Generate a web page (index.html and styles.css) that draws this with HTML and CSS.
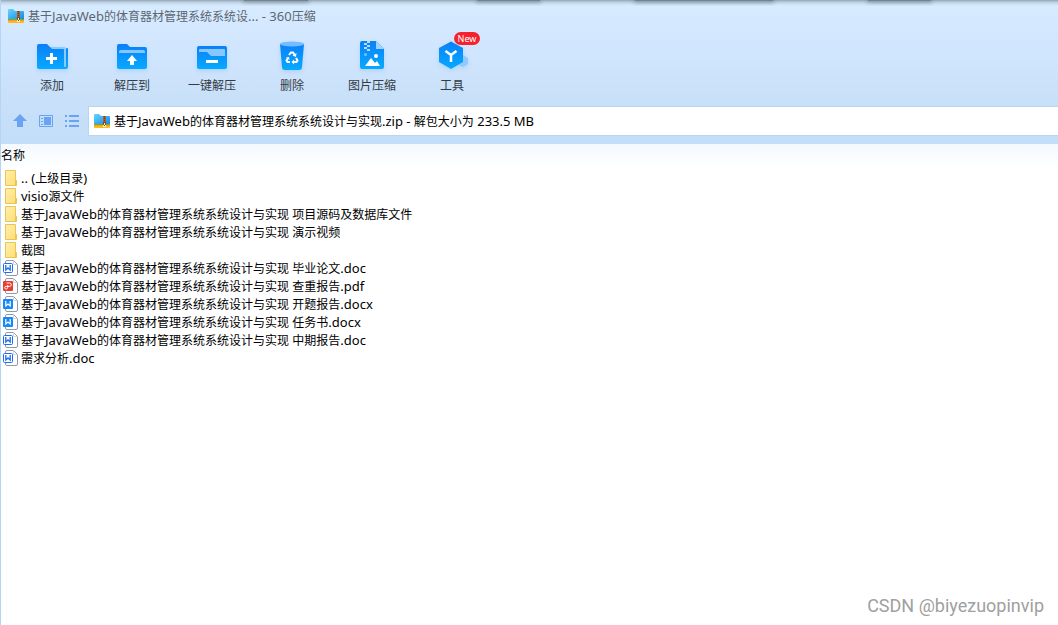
FILE: index.html
```html
<!DOCTYPE html>
<html lang="zh-CN">
<head>
<meta charset="utf-8">
<title>360压缩</title>
<link rel="stylesheet" href="styles.css">
</head>
<body>
<svg class="defs" aria-hidden="true">
  <defs>
    <linearGradient id="blue" x1="0" y1="0" x2="0" y2="1"><stop offset="0" stop-color="#0a80f8"/><stop offset="1" stop-color="#06aaff"/></linearGradient>
    <linearGradient id="zipblue" x1="0" y1="0" x2="1" y2="1"><stop offset="0" stop-color="#66d5ff"/><stop offset="1" stop-color="#1789e6"/></linearGradient>
    <linearGradient id="yellow" x1="0" y1="0" x2="1" y2="1"><stop offset="0" stop-color="#fff0b0"/><stop offset="1" stop-color="#ffdc70"/></linearGradient>
    <symbol id="zip" viewBox="0 0 16 14">
      <path d="M0 1Q0 0 1 0h4l2 2h8q1 0 1 1v7H0z" fill="url(#zipblue)"/>
      <path d="M0 10h16v1H0z" fill="#65b82e"/><path d="M0 11h16v2q0 1-1 1H1q-1 0-1-1z" fill="#ffb91e"/><path d="M0 11h16v1H0z" fill="#ff961b"/>
      <path d="M9 2h3v8H9z" fill="#a5612f"/><path d="M10 2h1v1h-1zM10 4h1v1h-1zM10 6h1v1h-1z" fill="#6e3d1f"/>
      <path d="M9 8h3v5H9z" fill="#7c4a25"/><path d="M10 9h1v2h1v2H9v-2h1z" fill="#fff0bb"/><path d="M10 11h1v1h-1z" fill="#7c4a25"/>
    </symbol>
    <symbol id="folder" viewBox="0 0 16 16"><path d="M2.5.5h10v10h1v5h-11z" fill="url(#yellow)" stroke="#e9c653"/><path d="M12.500 10.500v5" stroke="#e9c653"/></symbol>
    <symbol id="page" viewBox="0 0 16 16"><path d="M2.500 3V2q0-1.500 1.500-1.500h6.500l4 4V14q0 1.500-1.500 1.500H4Q2.500 15.500 2.500 14v-1" fill="#fff" stroke="#9299aa"/><path d="M10.500.5v4h4" fill="none" stroke="#d5d8df"/></symbol>
    <symbol id="doc" viewBox="0 0 16 16"><use href="#page"/><rect x=".5" y="3.500" width="9" height="9" rx="1" fill="#fff" stroke="#1c6cf0"/><path d="M2.800 5v5l2.200-2 2.200 2V5" fill="none" stroke="#1c6cf0" stroke-width="1.300"/></symbol>
    <symbol id="docx" viewBox="0 0 16 16"><use href="#page"/><rect y="3" width="10" height="10" rx="1" fill="#1688fa"/><path d="M2.800 5v5l2.200-2 2.200 2V5" fill="none" stroke="#fff" stroke-width="1.200"/></symbol>
    <symbol id="pdf" viewBox="0 0 16 16"><use href="#page"/><rect y="3" width="10" height="10" rx="1" fill="#ed3b31"/><path d="M3.500 5h3q1.800 0 1.800 1.700T6.500 8.400H3.200q-1.500 0-1.500 1.300T3.200 11q1.500 0 1.500-1.500V7" fill="none" stroke="#fff"/></symbol>
  </defs>
</svg>
<div class="window">
  <header class="chrome">
    <div class="edge" aria-hidden="true"><i></i><i></i><i></i><i></i></div>
    <h1 class="title"><svg class="zip"><use href="#zip"/></svg><span>基于<b>JavaWeb</b>的体育器材管理系统系统设<b>... - 360</b>压缩</span></h1>
    <nav class="tools">
      <button type="button"><svg viewBox="0 0 40 36"><path d="M5 7q0-2 2-2h8l3 3h14v2l4-1v19q0 2-2 2H7q-2 0-2-2z" fill="url(#blue)"/><path d="M18 8h14q2 0 2 2v18h-1q-1 0-1-1V11q0-1-1-1H20z" fill="#8acaff"/><path d="M14 19.500h11M19.500 14v11" stroke="#fff" stroke-width="3"/></svg>添加</button>
      <button type="button"><svg viewBox="0 0 40 36"><path d="M5 7q0-2 2-2h8l3 3h15q2 0 2 2v18q0 2-2 2H7q-2 0-2-2z" fill="url(#blue)"/><path d="M7 14v-1q0-2 2-2h22q2 0 2 2v1z" fill="#86c7ff"/><path d="m20 16 5 6h-3v4h-4v-4h-3z" fill="#fff"/></svg>解压到</button>
      <button type="button"><svg viewBox="0 0 40 36"><rect x="5" y="7" width="30" height="23" rx="2" fill="url(#blue)"/><path d="M7 13v-2q0-1 1-1h24q1 0 1 1v6H19l-4-4z" fill="#86c7ff"/><path d="M14 22.500h12" stroke="#fff" stroke-width="3"/></svg>一键解压</button>
      <button type="button"><svg viewBox="0 0 40 36"><path d="M8 5h24l-2 23q0 3-3 3H13q-3 0-3-3z" fill="url(#blue)"/><ellipse cx="20" cy="5" rx="12" ry="2.500" fill="#75bdff"/><path d="m17 16 2-2.500h2l2 3M18 23h-2.500l-1-1.500 1.500-2.500M21.500 23h3l1-1.500-1.500-2.500" fill="none" stroke="#fff" stroke-width="2"/><path d="m24.500 14-.5 4-3.500-1.500zM14 18.500l3-.5.500 3zM22 20.500v5L19.500 23z" fill="#fff"/></svg>删除</button>
      <button type="button"><svg viewBox="0 0 40 36"><path d="M8 4q0-2 2-2h14l8 8v18q0 2-2 2H10q-2 0-2-2z" fill="url(#blue)"/><path d="M24 2l8 8h-8z" fill="#a0d3ff"/><path d="M12 4h3v2h-3zM15 2h3v2h-3zM15 6h3v2h-3zM12 8h3v2h-3zM15 10h3v2h-3z" fill="#b3dcff"/><circle cx="13.500" cy="15.500" r="1.500" fill="#76c3ff"/><circle cx="24" cy="17" r="2" fill="#fff"/><path d="m13 27 6-8 4 5 2-2 3 5z" fill="#fff"/></svg>图片压缩</button>
      <button type="button"><svg viewBox="0 0 40 36"><path d="m31 16 5 3v6l-5 3-6-3v-6z" fill="#91c9ff"/><path d="M19 2.500 31 9v14l-12 7-12-7V9z" fill="url(#blue)"/><path d="m13.500 12 5.500 4 5.500-4M19 16v7" fill="none" stroke="#fff" stroke-width="2.500"/></svg>工具<em class="badge">New</em></button>
    </nav>
    <div class="address">
      <div class="views">
        <button type="button" aria-label="上级目录"><svg viewBox="0 0 16 16"><path d="m8 1 7 7h-4v6H5V8H1z" fill="#69a3f1"/></svg></button>
        <button type="button" aria-label="预览"><svg viewBox="0 0 16 16"><path d="M1.500 2.500h13v11h-13z" fill="#c3ddfc" stroke="#69a3f1"/><path d="M6 4h7v8H6zM3 5h2v1H3zM3 8h2v1H3zM3 11h2v1H3z" fill="#69a3f1"/></svg></button>
        <button type="button" aria-label="列表"><svg viewBox="0 0 16 16"><path d="M1 2h2v2H1zM1 7h2v2H1zM1 12h2v2H1zM5 2h10v2H5zM5 7h10v2H5zM5 12h10v2H5z" fill="#69a3f1"/></svg></button>
      </div>
      <div class="path"><svg class="zip"><use href="#zip"/></svg><span>基于<b>JavaWeb</b>的体育器材管理系统系统设计与实现<b>.zip - </b>解包大小为<b> 233.5 MB</b></span></div>
    </div>
  </header>
  <main>
    <table class="files">
      <thead><tr><th scope="col">名称</th></tr></thead>
      <tbody>
        <tr><td><svg><use href="#folder"/></svg><b>.. (</b>上级目录<b>)</b></td></tr>
        <tr><td><svg><use href="#folder"/></svg><b>visio</b>源文件</td></tr>
        <tr><td><svg><use href="#folder"/></svg>基于<b>JavaWeb</b>的体育器材管理系统系统设计与实现<b> </b>项目源码及数据库文件</td></tr>
        <tr><td><svg><use href="#folder"/></svg>基于<b>JavaWeb</b>的体育器材管理系统系统设计与实现<b> </b>演示视频</td></tr>
        <tr><td><svg><use href="#folder"/></svg>截图</td></tr>
        <tr><td><svg><use href="#doc"/></svg>基于<b>JavaWeb</b>的体育器材管理系统系统设计与实现<b> </b>毕业论文<b>.doc</b></td></tr>
        <tr><td><svg><use href="#pdf"/></svg>基于<b>JavaWeb</b>的体育器材管理系统系统设计与实现<b> </b>查重报告<b>.pdf</b></td></tr>
        <tr><td><svg><use href="#docx"/></svg>基于<b>JavaWeb</b>的体育器材管理系统系统设计与实现<b> </b>开题报告<b>.docx</b></td></tr>
        <tr><td><svg><use href="#docx"/></svg>基于<b>JavaWeb</b>的体育器材管理系统系统设计与实现<b> </b>任务书<b>.docx</b></td></tr>
        <tr><td><svg><use href="#doc"/></svg>基于<b>JavaWeb</b>的体育器材管理系统系统设计与实现<b> </b>中期报告<b>.doc</b></td></tr>
        <tr><td><svg><use href="#doc"/></svg>需求分析<b>.doc</b></td></tr>
      </tbody>
    </table>
  </main>
  <footer class="mark">CSDN @biyezuopinvip</footer>
</div>
</body>
</html>
```
FILE: styles.css
```css
* { box-sizing: border-box; }
body { margin: 0; background: #fff; color: #000; font: 12px/18px "Noto Sans", "Noto Sans CJK SC", sans-serif; }
b { font-weight: 400; font-size: 13px; line-height: 1; white-space: pre; }
button { border: 0; padding: 0; background: none; color: inherit; font: inherit; }
svg { display: block; flex: none; }
.defs { position: absolute; width: 0; height: 0; }
.window { min-height: 100vh; display: flex; flex-direction: column; border-left: 1px solid #b6d4f4; }
.chrome { position: relative; padding-bottom: 9px; background: linear-gradient(#d7ecff 0, #d4e9ff 24px, #d0e5fe 56px, #c9e0f9 98px, #c3def9 144px); }
.edge { position: absolute; inset: 0 0 auto; height: 6px; background: linear-gradient(#8fa1b2 0, #a9bccd 1px, #c5d9ea 3px, #d7ecff00 6px); overflow: hidden; }
.edge i { position: absolute; top: 0; height: 1px; background: #728394; box-shadow: 0 0 4px 1px #728394; }
.edge i:nth-child(1) { left: 23%; width: 6%; }
.edge i:nth-child(2) { left: 45%; width: 6%; }
.edge i:nth-child(3) { left: 60%; width: 13%; }
.edge i:nth-child(4) { left: 82%; width: 6%; }
.title { display: flex; align-items: center; gap: 4px; height: 32px; margin: 0; padding-left: 7px; font-size: 12px; font-weight: 400; color: #5d6671; }
.title span, .path span { padding-top: 2px; }
.zip { width: 16px; height: 14px; }
.tools { display: flex; height: 75px; padding-left: 11px; color: #333b45; }
.tools button { position: relative; width: 80px; display: flex; flex-direction: column; align-items: center; padding-top: 7px; gap: 2px; }
.tools svg { width: 40px; height: 36px; filter: drop-shadow(0 2px 2px #68afff50); }
.badge { position: absolute; top: 0; left: 42px; width: 26px; height: 13px; border-radius: 7px; background: #f5222d; color: #fff; font-size: 9px; line-height: 13px; font-style: normal; }
.address { display: flex; }
.views { display: flex; align-items: center; gap: 10px; width: 88px; padding-left: 11px; }
.views svg { width: 16px; height: 16px; }
.path { flex: 1; display: flex; align-items: center; gap: 4px; height: 28px; padding-left: 5px; background: #fff; box-shadow: 0 0 0 1px #b9d6f1; }
main { flex: 1; }
.files { width: 100%; border-collapse: collapse; }
th { height: 25px; padding: 0 0 2px; background: linear-gradient(#f4f9ff, #fff); text-align: left; font-weight: 400; }
td { height: 18px; padding: 1px 0 0 2px; white-space: nowrap; line-height: 16px; }
td svg { display: inline-block; width: 16px; height: 16px; margin-right: 2px; vertical-align: -3px; }
.mark { align-self: flex-end; padding: 0 14px 8px 0; color: #a0a0a0; font: 400 18px/22px Roboto, Arial, sans-serif; }
```
